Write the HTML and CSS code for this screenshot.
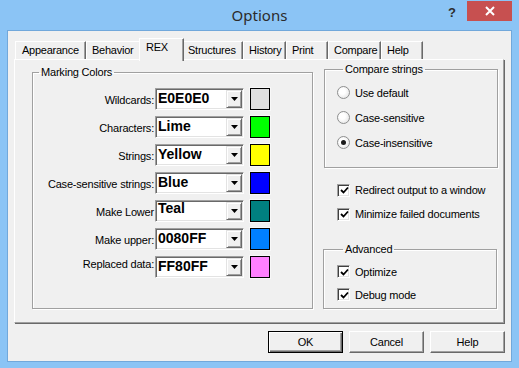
FILE: index.html
```html
<!DOCTYPE html>
<html lang="en" dir="ltr">

<head>
    <meta charset="utf-8">
    <title>Options</title>
    <link rel="stylesheet" href="styles.css">
</head>

<body>
    <div class="window">
        <div class="titlebar">
            <div class="title">Options</div>
            <div class="caption">
                <span class="q">?</span>
                <span class="close">
                    <svg width="10" height="10" viewBox="0 0 10 10"><path d="M1 1 L9 9 M9 1 L1 9" stroke="#fff" stroke-width="2" /></svg>
                </span>
            </div>
        </div>

        <div class="client">
            <div class="tabs">
                <div class="tab">Appearance</div>
                <div class="tab">Behavior</div>
                <div class="tab active">REX</div>
                <div class="tab">Structures</div>
                <div class="tab">History</div>
                <div class="tab">Print</div>
                <div class="tab">Compare</div>
                <div class="tab">Help</div>
            </div>

            <div class="panel">
                <fieldset class="group colors">
                    <legend>Marking Colors</legend>
                    <div class="color-grid">
                        <label>Wildcards:</label>
                        <div class="combo"><span class="value">E0E0E0</span><span class="drop"><svg width="7" height="4"><polygon points="0,0 7,0 3.5,4" fill="#000" /></svg></span></div>
                        <span class="swatch" style="background:#E0E0E0"></span>

                        <label>Characters:</label>
                        <div class="combo"><span class="value">Lime</span><span class="drop"><svg width="7" height="4"><polygon points="0,0 7,0 3.5,4" fill="#000" /></svg></span></div>
                        <span class="swatch" style="background:#00FF00"></span>

                        <label>Strings:</label>
                        <div class="combo"><span class="value">Yellow</span><span class="drop"><svg width="7" height="4"><polygon points="0,0 7,0 3.5,4" fill="#000" /></svg></span></div>
                        <span class="swatch" style="background:#FFFF00"></span>

                        <label>Case-sensitive strings:</label>
                        <div class="combo"><span class="value">Blue</span><span class="drop"><svg width="7" height="4"><polygon points="0,0 7,0 3.5,4" fill="#000" /></svg></span></div>
                        <span class="swatch" style="background:#0000FF"></span>

                        <label>Make Lower</label>
                        <div class="combo"><span class="value up">Teal</span><span class="drop"><svg width="7" height="4"><polygon points="0,0 7,0 3.5,4" fill="#000" /></svg></span></div>
                        <span class="swatch" style="background:#008080"></span>

                        <label>Make upper:</label>
                        <div class="combo"><span class="value">0080FF</span><span class="drop"><svg width="7" height="4"><polygon points="0,0 7,0 3.5,4" fill="#000" /></svg></span></div>
                        <span class="swatch" style="background:#0080FF"></span>

                        <label class="hi">Replaced data:</label>
                        <div class="combo"><span class="value">FF80FF</span><span class="drop"><svg width="7" height="4"><polygon points="0,0 7,0 3.5,4" fill="#000" /></svg></span></div>
                        <span class="swatch" style="background:#FF80FF"></span>
                    </div>
                </fieldset>

                <div class="side">
                    <fieldset class="group compare">
                        <legend>Compare strings</legend>
                        <div class="row"><span class="radio"></span>Use default</div>
                        <div class="row"><span class="radio"></span>Case-sensitive</div>
                        <div class="row"><span class="radio on"></span>Case-insensitive</div>
                    </fieldset>

                    <div class="checks">
                        <div class="row"><span class="check"><svg width="9" height="9"><path d="M1 4 L3.5 6.5 L8 1.5" stroke="#000" stroke-width="1.8" fill="none" /></svg></span>Redirect output to a window</div>
                        <div class="row"><span class="check"><svg width="9" height="9"><path d="M1 4 L3.5 6.5 L8 1.5" stroke="#000" stroke-width="1.8" fill="none" /></svg></span>Minimize failed documents</div>
                    </div>

                    <fieldset class="group advanced">
                        <legend>Advanced</legend>
                        <div class="row"><span class="check"><svg width="9" height="9"><path d="M1 4 L3.5 6.5 L8 1.5" stroke="#000" stroke-width="1.8" fill="none" /></svg></span>Optimize</div>
                        <div class="row"><span class="check"><svg width="9" height="9"><path d="M1 4 L3.5 6.5 L8 1.5" stroke="#000" stroke-width="1.8" fill="none" /></svg></span>Debug mode</div>
                    </fieldset>
                </div>
            </div>

            <div class="buttons">
                <div class="btn default">OK</div>
                <div class="btn">Cancel</div>
                <div class="btn">Help</div>
            </div>
        </div>
    </div>
</body>

</html>
```

FILE: styles.css
```css
* {
    box-sizing: border-box;
}

body {
    margin: 0;
    font-family: "Liberation Sans", Arial, sans-serif;
    font-size: 11px;
    letter-spacing: -0.2px;
    color: #000;
}

.window {
    width: 519px;
    height: 368px;
    background-color: #8BC4F5;
    display: flex;
    flex-direction: column;
}

.titlebar {
    height: 31px;
    display: grid;
    grid-template-columns: 1fr auto 1fr;
    align-items: start;
    letter-spacing: 0;
}

.title {
    grid-column: 2;
    font-family: "Noto Sans", sans-serif;
    font-size: 15px;
    line-height: 20px;
    padding-top: 5px;
    color: #2B2B2B;
}

.caption {
    grid-column: 3;
    justify-self: end;
    display: flex;
    align-items: flex-start;
    margin: 1px 7px 0 0;
}

.caption .q {
    font-weight: bold;
    font-size: 13px;
    line-height: 13px;
    color: #2E2E2E;
    margin: 5px 11px 0 0;
}

.caption .close {
    width: 45px;
    height: 20px;
    background-color: #C75050;
    display: flex;
    align-items: center;
    justify-content: center;
}

.client {
    margin: 0 8px;
    height: 330px;
    background-color: #F0F0F0;
    box-shadow: 0 0 0 1px #71A8DB;
    padding: 7px 6px 0 6px;
    display: flex;
    flex-direction: column;
}

/* tab strip */

.tabs {
    display: flex;
    align-items: flex-end;
    height: 21px;
    padding-left: 1px;
}

.tab {
    height: 18px;
    line-height: 16px;
    padding-left: 5px;
    letter-spacing: -0.25px;
    white-space: nowrap;
    overflow: hidden;
    border: 1px solid;
    border-color: #FFF #696969 transparent #FFF;
    border-bottom: 0;
    box-shadow: inset -1px 0 0 #A0A0A0;
    background-color: #F0F0F0;
}

.tab:nth-child(1) { width: 71px; padding-left: 6px; }
.tab:nth-child(2) { width: 55px; }
.tab:nth-child(3) { width: 45px; padding-left: 6px; }
.tab:nth-child(4) { width: 61px; }
.tab:nth-child(5) { width: 43px; }
.tab:nth-child(6) { width: 42px; }
.tab:nth-child(7) { width: 53px; }
.tab:nth-child(8) { width: 42px; }

.tab.active {
    position: relative;
    z-index: 1;
    height: 23px;
    margin: 0 -2px -2px -2px;
}

.panel {
    height: 264px;
    margin-right: 1px;
    border: 1px solid;
    border-color: #FFF #A0A0A0 #A0A0A0 #FFF;
    box-shadow: 1px 1px 0 #696969;
    padding-left: 17px;
    display: flex;
    align-items: flex-start;
}

/* group boxes */

.group {
    margin: 0;
    padding: 0;
    border: 1px solid #A0A0A0;
    box-shadow: 1px 1px 0 #FFF, inset 1px 1px 0 #FFF;
}

.group legend {
    font-size: 11px;
    line-height: 13px;
    padding: 0 2px;
    margin-left: 6px;
}

.colors {
    width: 281px;
    height: 243px;
    margin-top: 6px;
    padding-top: 9px;
}

.color-grid {
    display: grid;
    grid-template-columns: 122px 89px 26px;
    grid-auto-rows: 22px;
    row-gap: 6px;
    align-items: center;
}

.color-grid label {
    text-align: right;
    padding: 3px 1px 0 0;
    line-height: 13px;
    white-space: nowrap;
}

.color-grid label.hi {
    padding: 0 1px 5px 0;
}

.combo {
    height: 22px;
    border: 1px solid;
    border-color: #A0A0A0 #FFF #FFF #A0A0A0;
    box-shadow: inset 1px 1px 0 #696969, inset -1px -1px 0 #E3E3E3;
    background-color: #FFF;
    padding: 1px;
    display: flex;
}

.combo .value {
    flex: 1;
    font-weight: bold;
    font-size: 14px;
    line-height: 16px;
    padding-left: 1px;
    letter-spacing: 0;
}

.combo .value.up {
    line-height: 13px;
}

.combo .drop {
    width: 16px;
    height: 18px;
    background-color: #F0F0F0;
    border: 1px solid;
    border-color: #E3E3E3 #696969 #696969 #E3E3E3;
    box-shadow: inset 1px 1px 0 #FFF, inset -1px -1px 0 #A0A0A0;
    display: flex;
    align-items: center;
    justify-content: center;
}

.swatch {
    justify-self: end;
    width: 20px;
    height: 22px;
    border: 1px solid #000;
    box-shadow: 0 0 0 1px #F8F8F8;
}

/* right side */

.side {
    width: 174px;
    margin-left: 10px;
    display: flex;
    flex-direction: column;
}

.row {
    display: flex;
    align-items: center;
    white-space: nowrap;
}

.compare {
    width: 174px;
    height: 105px;
    margin: 3px 0 0 1px;
    padding: 4px 0 0 12px;
}

.compare .row {
    height: 25px;
    gap: 5px;
}

.radio {
    width: 13px;
    height: 13px;
    border-radius: 50%;
    border: 1px solid #8E8F8F;
    background: radial-gradient(circle at 40% 40%, #FFF 30%, #DCDCDC 100%);
    display: flex;
    align-items: center;
    justify-content: center;
}

.radio.on::after {
    content: "";
    width: 5px;
    height: 5px;
    border-radius: 50%;
    background-color: #1A1A1A;
}

.checks {
    margin-top: 10px;
    padding-left: 14px;
}

.checks .row {
    height: 24px;
    gap: 5px;
}

.check {
    width: 13px;
    height: 13px;
    border: 1px solid;
    border-color: #A0A0A0 #FFF #FFF #A0A0A0;
    box-shadow: inset 1px 1px 0 #404040, inset -1px -1px 0 #E3E3E3;
    background-color: #FFF;
    display: flex;
    align-items: center;
    justify-content: center;
    padding: 1px 0 0 1px;
}

.advanced {
    width: 174px;
    height: 66px;
    margin-top: 17px;
    padding: 4px 0 0 13px;
}

.advanced .row {
    height: 23px;
    gap: 5px;
}

/* dialog buttons */

.buttons {
    display: flex;
    justify-content: flex-end;
    gap: 6px;
    margin-top: 8px;
}

.btn {
    width: 75px;
    height: 22px;
    line-height: 20px;
    text-align: center;
    border: 1px solid;
    border-color: #FFF #696969 #696969 #FFF;
    box-shadow: inset -1px -1px 0 #A0A0A0;
    background-color: #F0F0F0;
}

.btn.default {
    border-color: #000;
    box-shadow: inset 1px 1px 0 #FFF, inset -1px -1px 0 #696969, inset -2px -2px 0 #A0A0A0;
}
```
